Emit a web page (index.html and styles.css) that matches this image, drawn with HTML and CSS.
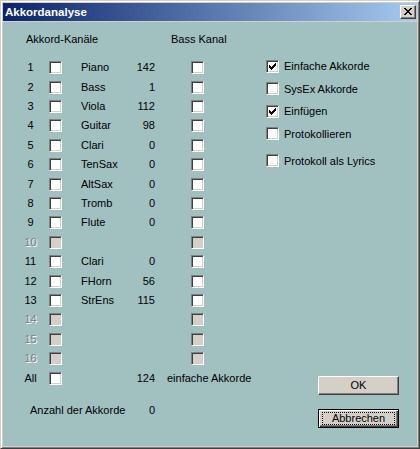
FILE: index.html
```html
<!DOCTYPE html>
<html lang="de">
<head>
<meta charset="utf-8">
<title>Akkordanalyse</title>
<link rel="stylesheet" href="styles.css">
</head>
<body>
<div class="window">
  <div class="titlebar">
    <span class="title">Akkordanalyse</span>
    <span class="close"><svg width="16" height="14" viewBox="0 0 16 14"><path d="M4 3h2v1h-2z M10 3h2v1h-2z M5 4h2v1h-2z M9 4h2v1h-2z M6 5h4v1h-4z M7 6h2v1h-2z M6 7h4v1h-4z M5 8h2v1h-2z M9 8h2v1h-2z M4 9h2v1h-2z M10 9h2v1h-2z" fill="#000"/></svg></span>
  </div>
  <div class="client">
    <div class="channels">
      <div class="hdr hdr-left">Akkord-Kanäle</div>
      <div class="hdr hdr-bass">Bass Kanal</div>

      <div class="num">1</div><div class="cbcell"><span class="cb"></span></div><div class="name">Piano</div><div class="val">142</div><div class="bcell"><span class="cb"></span></div>
      <div class="num">2</div><div class="cbcell"><span class="cb"></span></div><div class="name">Bass</div><div class="val">1</div><div class="bcell"><span class="cb"></span></div>
      <div class="num">3</div><div class="cbcell"><span class="cb"></span></div><div class="name">Viola</div><div class="val">112</div><div class="bcell"><span class="cb"></span></div>
      <div class="num">4</div><div class="cbcell"><span class="cb"></span></div><div class="name">Guitar</div><div class="val">98</div><div class="bcell"><span class="cb"></span></div>
      <div class="num">5</div><div class="cbcell"><span class="cb"></span></div><div class="name">Clari</div><div class="val">0</div><div class="bcell"><span class="cb"></span></div>
      <div class="num">6</div><div class="cbcell"><span class="cb"></span></div><div class="name">TenSax</div><div class="val">0</div><div class="bcell"><span class="cb"></span></div>
      <div class="num">7</div><div class="cbcell"><span class="cb"></span></div><div class="name">AltSax</div><div class="val">0</div><div class="bcell"><span class="cb"></span></div>
      <div class="num">8</div><div class="cbcell"><span class="cb"></span></div><div class="name">Tromb</div><div class="val">0</div><div class="bcell"><span class="cb"></span></div>
      <div class="num">9</div><div class="cbcell"><span class="cb"></span></div><div class="name">Flute</div><div class="val">0</div><div class="bcell"><span class="cb"></span></div>
      <div class="num dis">10</div><div class="cbcell"><span class="cb dis"></span></div><div class="name"></div><div class="val"></div><div class="bcell"><span class="cb dis"></span></div>
      <div class="num">11</div><div class="cbcell"><span class="cb"></span></div><div class="name">Clari</div><div class="val">0</div><div class="bcell"><span class="cb"></span></div>
      <div class="num">12</div><div class="cbcell"><span class="cb"></span></div><div class="name">FHorn</div><div class="val">56</div><div class="bcell"><span class="cb"></span></div>
      <div class="num">13</div><div class="cbcell"><span class="cb"></span></div><div class="name">StrEns</div><div class="val">115</div><div class="bcell"><span class="cb"></span></div>
      <div class="num dis">14</div><div class="cbcell"><span class="cb dis"></span></div><div class="name"></div><div class="val"></div><div class="bcell"><span class="cb dis"></span></div>
      <div class="num dis">15</div><div class="cbcell"><span class="cb dis"></span></div><div class="name"></div><div class="val"></div><div class="bcell"><span class="cb dis"></span></div>
      <div class="num dis">16</div><div class="cbcell"><span class="cb dis"></span></div><div class="name"></div><div class="val"></div><div class="bcell"><span class="cb dis"></span></div>
      <div class="num">All</div><div class="cbcell"><span class="cb"></span></div><div class="name"></div><div class="val">124</div><div class="bcell-text">einfache Akkorde</div>

      <div class="anzahl">Anzahl der Akkorde</div><div class="val anzahl-val">0</div>
    </div>

    <div class="side">
      <div class="options">
        <div class="opt"><span class="cb"><svg class="check" width="13" height="13" viewBox="0 0 13 13"><path d="M3 5h1v3h-1z M4 6h1v3h-1z M5 7h1v3h-1z M6 6h1v3h-1z M7 5h1v3h-1z M8 4h1v3h-1z M9 3h1v3h-1z" fill="#000"/></svg></span><span class="lbl">Einfache Akkorde</span></div>
        <div class="opt"><span class="cb"></span><span class="lbl">SysEx Akkorde</span></div>
        <div class="opt"><span class="cb"><svg class="check" width="13" height="13" viewBox="0 0 13 13"><path d="M3 5h1v3h-1z M4 6h1v3h-1z M5 7h1v3h-1z M6 6h1v3h-1z M7 5h1v3h-1z M8 4h1v3h-1z M9 3h1v3h-1z" fill="#000"/></svg></span><span class="lbl">Einfügen</span></div>
        <div class="opt"><span class="cb"></span><span class="lbl">Protokollieren</span></div>
        <div class="opt opt-last"><span class="cb"></span><span class="lbl">Protokoll als Lyrics</span></div>
      </div>
      <div class="buttons">
        <div class="btn">OK</div>
        <div class="btn default"><span class="focus">Abbrechen</span></div>
      </div>
    </div>
  </div>
</div>
</body>
</html>
```

FILE: styles.css
```css
html, body {
  margin: 0;
  padding: 0;
  background: #a1c1c0;
}

body {
  font-family: "Liberation Sans", Arial, sans-serif;
  font-size: 11px;
  color: #000;
}

.window {
  width: 420px;
  height: 449px;
  box-sizing: border-box;
  border: 1px solid;
  border-color: #d4d0c8 #404040 #404040 #d4d0c8;
  box-shadow: inset 1px 1px #fff, inset -1px -1px #808080;
  padding: 2px;
  background: #d4d0c8;
  display: flex;
  flex-direction: column;
}

.titlebar {
  height: 18px;
  flex: none;
  display: flex;
  align-items: center;
  background: linear-gradient(to right, #0a246a, #a6caf0);
  margin-bottom: 1px;
}

.title {
  color: #fff;
  font-weight: bold;
  font-size: 11.5px;
  padding-left: 2px;
  line-height: 18px;
}

.close {
  margin-left: auto;
  margin-right: 1px;
  width: 16px;
  height: 14px;
  box-sizing: border-box;
  background: #d4d0c8;
  border: 1px solid;
  border-color: #fff #404040 #404040 #fff;
  box-shadow: inset -1px -1px #808080;
}

.close svg {
  display: block;
  margin: -1px;
}

.client {
  flex: 1;
  display: flex;
  background: #a1c1c0;
  padding-bottom: 18px;
}

/* Channel grid */
.channels {
  margin-left: 17px;
  margin-top: 8.3px;
  display: grid;
  grid-template-columns: 21px 21px 53px 40px 49px;
  grid-template-rows: 27.8px repeat(17, 19.4px) 32.4px;
  align-items: center;
  align-self: start;
  line-height: 13px;
  white-space: nowrap;
}

.hdr {
  align-self: start;
  line-height: 19.4px;
}

.hdr-left {
  grid-column: 1 / 5;
  padding-left: 6px;
}

.hdr-bass {
  grid-column: 5;
  padding-left: 16px;
}

.num {
  text-align: center;
}

.num.dis {
  color: #808080;
  text-shadow: 1px 1px #fff;
}

.cbcell {
  display: flex;
  justify-content: flex-end;
}

.name {
  padding-left: 19px;
}

.val {
  text-align: right;
}

.bcell {
  display: flex;
  justify-content: flex-end;
}

.bcell-text {
  padding-left: 12px;
}

.anzahl {
  grid-column: 1 / 4;
  padding-left: 10px;
  align-self: end;
  line-height: 19.4px;
}

.anzahl-val {
  align-self: end;
  line-height: 19.4px;
}

/* Checkbox */
.cb {
  display: block;
  width: 13px;
  height: 13px;
  box-sizing: border-box;
  border: 1px solid;
  border-color: #808080 #fff #fff #808080;
  box-shadow: inset 1px 1px #404040, inset -1px -1px #d4d0c8;
  background: #fff;
  flex: none;
}

.cb.dis {
  background: #d4d0c8;
}

.check {
  display: block;
  margin: -1px;
}

/* Right side */
.side {
  margin-left: 62px;
  padding-top: 33.3px;
  display: flex;
  flex-direction: column;
  flex: 1;
}

.opt {
  height: 22.4px;
  display: flex;
  align-items: center;
  gap: 5px;
  white-space: nowrap;
}

.opt-last {
  margin-top: 4.7px;
}

.buttons {
  margin-top: auto;
  margin-left: 52px;
  display: flex;
  flex-direction: column;
  gap: 14px;
}

.btn {
  width: 81px;
  height: 19px;
  box-sizing: border-box;
  background: #d4d0c8;
  border: 1px solid;
  border-color: #fff #404040 #404040 #fff;
  box-shadow: inset -1px -1px #808080;
  display: flex;
  align-items: center;
  justify-content: center;
  line-height: 13px;
}

.btn.default {
  border-color: #000;
  box-shadow: inset 1px 1px #fff, inset -1px -1px #404040, inset -2px -2px #808080;
  padding: 2px 3px 2px 3px;
  align-items: stretch;
}

.focus {
  flex: 1;
  display: flex;
  align-items: center;
  justify-content: center;
  border: 1px dotted #000;
}
```
